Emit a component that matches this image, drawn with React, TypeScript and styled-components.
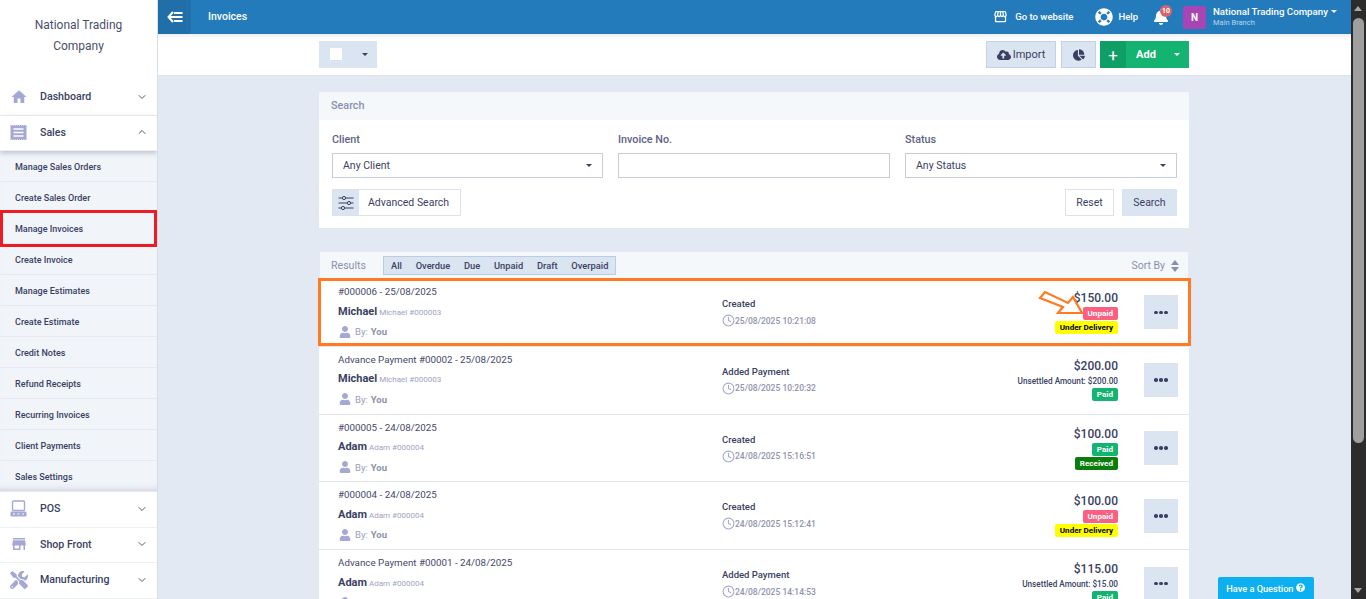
import React from "react";
import styled, { createGlobalStyle } from "styled-components";
import { FaBell, FaChartPie, FaCloudUploadAlt, FaLifeRing, FaQuestionCircle, FaTools, FaUser } from "react-icons/fa";
import { FiChevronDown, FiChevronUp, FiClock } from "react-icons/fi";
import { MdHome, MdStore, MdStorefront } from "react-icons/md";

const INK = "#3a3f63";
const MUTED = "#8a8fb0";
const ICON = "#a5a8d4";

const GlobalStyle = createGlobalStyle`
  html, body { margin: 0; padding: 0; height: 599px; overflow: hidden; background: #e3e9f2; }
  body { font-family: Roboto, "Liberation Sans", sans-serif; color: ${INK}; }
  * { box-sizing: border-box; }
`;

const Page = styled.div`
  display: flex;
  width: 1366px;
  height: 599px;
  overflow: hidden;
  position: relative;
`;

const Sidebar = styled.aside`
  width: 158px;
  flex: none;
  height: 599px;
  background: #fff;
  border-right: 1px solid #d8dde6;
  overflow: hidden;
`;

const Brand = styled.div`
  height: 80px;
  padding: 15px 24px 0;
  text-align: center;
  font-size: 12px;
  line-height: 21px;
  color: #4a4f6c;
`;

const MenuItem = styled.div<{ $open?: boolean }>`
  height: 35.5px;
  display: flex;
  align-items: center;
  padding: 0 9px 1px 10px;
  border-bottom: 1px solid #eef0f4;
  font-size: 10.6px;
  font-weight: 500;
  color: ${INK};
  position: relative;
  background: #fff;
  ${(p) => p.$open && "box-shadow: 0 2px 5px rgba(60,70,100,.3); z-index: 2;"}
`;

const MenuIcon = styled.span`
  width: 30px;
  display: flex;
  color: ${ICON};
  font-size: 18px;
`;

const MenuLabel = styled.span`
  flex: 1;
`;

const Chevron = styled.span`
  display: flex;
  font-size: 12px;
  color: #555a78;
`;

const SubMenu = styled.div`
  background: #f1f4f9;
  box-shadow: inset 0 -8px 8px -8px rgba(60,70,100,.35);
`;

const SubItem = styled.div<{ $marked?: boolean }>`
  height: 31px;
  display: flex;
  align-items: center;
  padding: 2px 0 0 15px;
  font-size: 9px;
  font-weight: 500;
  color: ${INK};
  border-bottom: 1px solid #e6eaf0;
  position: relative;
  ${(p) => p.$marked && "&::after { content: ''; position: absolute; left: 0; right: 0; top: -3px; bottom: -4px; border: 3px solid #ed1c24; }"}
`;

const Main = styled.main`
  flex: 1;
  min-width: 0;
  display: flex;
  flex-direction: column;
`;

const TopBar = styled.header`
  height: 34px;
  flex: none;
  display: flex;
  align-items: center;
  background: #247bbc;
  color: #fff;
`;

const BackButton = styled.div`
  width: 33px;
  height: 34px;
  background: #206fa9;
  display: flex;
  align-items: center;
  justify-content: center;
`;

const PageTitle = styled.div`
  margin-left: 17px;
  padding-bottom: 2px;
  flex: 1;
  font-size: 10.5px;
  font-weight: 500;
`;

const TopLink = styled.div<{ $gap: number; $offset?: number }>`
  display: flex;
  align-items: center;
  font-size: 9.5px;
  font-weight: 500;
  gap: ${(p) => p.$gap}px;
  margin-left: ${(p) => p.$offset || 0}px;
  padding-bottom: 1px;
`;

const WebsiteIcon = styled.span`
  display: flex;
  font-size: 15px;
`;

const HelpIcon = styled.span`
  display: flex;
  font-size: 18px;
`;

const BellWrap = styled.div`
  position: relative;
  display: flex;
  font-size: 16px;
  margin: 0 14px 0 15px;
`;

const BellBadge = styled.span`
  position: absolute;
  top: -4px;
  left: 7px;
  width: 12px;
  height: 12px;
  border-radius: 50%;
  background: #d9626b;
  font-size: 7px;
  font-weight: 700;
  display: flex;
  align-items: center;
  justify-content: center;
`;

const Avatar = styled.div`
  width: 23px;
  height: 23px;
  border-radius: 2px;
  background: #a845b5;
  font-size: 10px;
  font-weight: 700;
  display: flex;
  align-items: center;
  justify-content: center;
`;

const Account = styled.div`
  margin: 0 14px 0 7px;
  width: 124px;
`;

const AccountName = styled.div`
  font-size: 9.7px;
  font-weight: 500;
  line-height: 11px;
  display: flex;
  align-items: center;
  gap: 3px;
  white-space: nowrap;
`;

const AccountBranch = styled.div`
  font-size: 7.5px;
  line-height: 11px;
  color: #b9d6ee;
`;

const Caret = styled.span<{ $color?: string }>`
  width: 0;
  height: 0;
  border-left: 3px solid transparent;
  border-right: 3px solid transparent;
  border-top: 3px solid ${(p) => p.$color || "#fff"};
  display: inline-block;
`;

const ToolbarBar = styled.div`
  height: 42px;
  flex: none;
  background: #fff;
  border-bottom: 1px solid #dde3ec;
  box-shadow: inset 0 6px 6px -6px rgba(60,70,100,.2);
`;

const Wrap = styled.div`
  width: 870px;
  margin-left: 161px;
`;

const ToolbarRow = styled(Wrap)`
  height: 41px;
  display: flex;
  align-items: center;
  justify-content: space-between;
`;

const ToolGroup = styled.div`
  display: flex;
  gap: 5px;
`;

const SelectAll = styled.div`
  width: 58px;
  height: 27px;
  background: #dbe5f1;
  display: flex;
  align-items: center;
  padding: 0 9px 0 11px;
  justify-content: space-between;
`;

const Check = styled.span`
  width: 12px;
  height: 12px;
  background: #fff;
  margin-bottom: 2px;
`;

const ToolButton = styled.div<{ $w: number }>`
  width: ${(p) => p.$w}px;
  height: 27px;
  background: #dbe5f1;
  border: 1px solid #c3d2e6;
  display: flex;
  align-items: center;
  justify-content: center;
  gap: 2px;
  font-size: 11px;
  color: ${INK};
`;

const ToolIcon = styled.span`
  display: flex;
  font-size: 14px;
  color: ${INK};
`;

const PieIcon = styled.span`
  display: flex;
  font-size: 12px;
  color: ${INK};
`;

const AddButton = styled.div`
  width: 89px;
  height: 27px;
  margin-left: -1px;
  background: #14b371;
  color: #fff;
  display: flex;
  align-items: center;
  font-size: 11px;
  font-weight: 700;
`;

const AddPlus = styled.span`
  width: 26px;
  height: 27px;
  background: #0f9f66;
  font-size: 17px;
  font-weight: 400;
  display: flex;
  align-items: center;
  justify-content: center;
`;

const AddLabel = styled.span`
  flex: 1;
  text-align: center;
  padding-right: 8px;
`;

const AddCaret = styled.span`
  display: flex;
  padding-right: 9px;
`;

const Content = styled(Wrap)`
  padding-top: 16px;
`;

const SearchPanel = styled.section`
  background: #fff;
  height: 136px;
  margin-bottom: 23px;
`;

const SearchHeader = styled.div`
  height: 28px;
  background: #f5f8fb;
  padding: 0 12px 2px;
  display: flex;
  align-items: center;
  font-size: 10.8px;
  font-weight: 500;
  color: ${MUTED};
`;

const SearchBody = styled.div`
  padding: 13px 12px 0 13px;
`;

const Fields = styled.div`
  display: grid;
  grid-template-columns: 271px 272px 272px;
  column-gap: 15px;
`;

const Field = styled.div`
  display: flex;
  flex-direction: column;
`;

const FieldLabel = styled.label`
  font-size: 10.8px;
  font-weight: 500;
  line-height: 13px;
  color: #5e6285;
  margin-bottom: 7px;
`;

const Input = styled.div`
  height: 25px;
  border: 1px solid #c8ccd6;
  background: #fff;
  display: flex;
  align-items: center;
  justify-content: space-between;
  padding: 0 10px;
  font-size: 10.5px;
  color: ${INK};
`;

const SearchActions = styled.div`
  display: flex;
  justify-content: space-between;
  margin-top: 11px;
`;

const AdvancedSearch = styled.div`
  width: 129px;
  height: 27px;
  border: 1px solid #dde1e8;
  display: flex;
  align-items: center;
  font-size: 10.5px;
  color: ${INK};
`;

const AdvancedIcon = styled.span`
  width: 26px;
  height: 25px;
  background: #dbe5f1;
  display: flex;
  align-items: center;
  justify-content: center;
  margin-right: 9px;
`;

const ActionGroup = styled.div`
  display: flex;
  gap: 8px;
`;

const PlainButton = styled.div`
  width: 49px;
  height: 27px;
  border: 1px solid #dde1e8;
  background: #fff;
  font-size: 10.5px;
  display: flex;
  align-items: center;
  justify-content: center;
`;

const SearchButton = styled.div`
  width: 55px;
  height: 27px;
  background: #dbe5f1;
  font-size: 10.5px;
  display: flex;
  align-items: center;
  justify-content: center;
`;

const ResultsHeader = styled.div`
  height: 28px;
  background: #f5f8fb;
  border: 1px solid #e6eaf0;
  border-bottom: 0;
  display: flex;
  align-items: center;
  padding: 0 9px 0 11px;
`;

const ResultsLabel = styled.span`
  font-size: 10.6px;
  color: ${MUTED};
  margin-right: 17px;
`;

const Filters = styled.div`
  display: flex;
  height: 19px;
  background: #dbe5f1;
  border: 1px solid #bccde3;
  align-items: center;
  padding: 0 7px 1px;
  gap: 13.8px;
  font-size: 9.3px;
  font-weight: 500;
  flex: none;
`;

const SortBy = styled.div`
  margin-left: auto;
  display: flex;
  align-items: center;
  gap: 6px;
  font-size: 10.5px;
  color: ${MUTED};
`;

const Row = styled.article<{ $marked?: boolean }>`
  height: 67.8px;
  background: #fff;
  border-bottom: 1px solid #e2e5ea;
  display: flex;
  position: relative;
  ${(p) => p.$marked && "&::after { content: ''; position: absolute; left: -1px; right: -2px; top: -1px; bottom: 0; border: 3px solid #ff7a21; pointer-events: none; }"}
`;

const RowLeft = styled.div`
  width: 403px;
  padding: 6px 0 0 19px;
  flex: none;
`;

const RowRef = styled.div`
  font-size: 9.8px;
  line-height: 13px;
  color: #44496a;
`;

const RowClient = styled.div`
  margin-top: 5.6px;
  line-height: 16px;
  font-size: 11px;
  font-weight: 700;
  color: ${INK};
`;

const ClientCode = styled.span`
  font-size: 8px;
  font-weight: 400;
  color: #9ea3c2;
  margin-left: 2px;
`;

const RowBy = styled.div`
  margin-top: 5px;
  display: flex;
  align-items: center;
  gap: 3px;
  font-size: 9.5px;
  color: #9a9eb8;
`;

const ByIcon = styled.span`
  display: flex;
  font-size: 12px;
  color: ${ICON};
  margin: 0 1px;
`;

const ByName = styled.b`
  font-weight: 700;
  color: #8d91ab;
`;

const RowMiddle = styled.div`
  width: 235px;
  padding-top: 18px;
  flex: none;
`;

const ActionName = styled.div`
  font-size: 9.5px;
  font-weight: 500;
  line-height: 13px;
  color: ${INK};
`;

const ActionTime = styled.div`
  margin-top: 4px;
  display: flex;
  align-items: center;
  font-size: 8.5px;
  color: #8f93ae;
  font-weight: 500;
`;

const ClockIcon = styled.span`
  display: flex;
  font-size: 13px;
  color: ${ICON};
`;

const RowAmount = styled.div`
  flex: 1;
  display: flex;
  flex-direction: column;
  align-items: flex-end;
  padding-top: 11px;
`;

const Amount = styled.div`
  font-size: 12px;
  font-weight: 500;
  line-height: 16px;
  color: ${INK};
`;

const Unsettled = styled.div`
  font-size: 8.2px;
  font-weight: 500;
  line-height: 12px;
  margin-top: 1px;
  color: ${INK};
`;

const Badge = styled.span<{ $bg: string; $fg: string }>`
  background: ${(p) => p.$bg};
  color: ${(p) => p.$fg};
  font-size: 8.1px;
  font-weight: 700;
  height: 13px;
  line-height: 13px;
  padding: 0 5px;
  border-radius: 2px;
  margin-top: 1px;
`;

const RowMenu = styled.div`
  width: 71px;
  flex: none;
  display: flex;
  align-items: center;
  justify-content: flex-end;
  padding-right: 11px;
`;

const DotsButton = styled.div`
  width: 34px;
  height: 34px;
  background: #dbe5f1;
  display: flex;
  align-items: center;
  justify-content: center;
  gap: 1.5px;
`;

const Dot = styled.i`
  width: 3.5px;
  height: 3.5px;
  border-radius: 50%;
  background: ${INK};
`;

const ArrowMark = styled.svg`
  position: absolute;
  left: 719px;
  top: 11px;
  pointer-events: none;
`;

const Scrollbar = styled.div`
  width: 15px;
  flex: none;
  height: 599px;
  background: #2c2c2c;
  position: relative;
  margin-left: auto;
`;

const ScrollThumb = styled.div`
  position: absolute;
  left: 2px;
  right: 2px;
  top: 18px;
  height: 425px;
  border-radius: 6px;
  background: #9f9f9f;
`;

const ScrollUp = styled.span`
  position: absolute;
  left: 3px;
  top: 6px;
  border-left: 4.5px solid transparent;
  border-right: 4.5px solid transparent;
  border-bottom: 5px solid #a8a8a8;
`;

const ScrollDown = styled.span`
  position: absolute;
  left: 3px;
  bottom: 6px;
  border-left: 4.5px solid transparent;
  border-right: 4.5px solid transparent;
  border-top: 5px solid #a8a8a8;
`;

const QuestionButton = styled.div`
  position: absolute;
  left: 1218px;
  top: 577px;
  width: 96px;
  height: 22px;
  background: #0cb0f0;
  color: #fff;
  border-radius: 2px 2px 0 0;
  font-size: 9.2px;
  font-weight: 500;
  display: flex;
  align-items: center;
  justify-content: center;
  gap: 3px;
`;

const SalesIcon = () => (
  <svg width="17" height="17" viewBox="0 0 17 17">
    <rect x="0.5" y="1" width="16" height="15" fill="#a5a8d4" />
    <path d="M1 1h15M1 16h15" stroke="#fff" strokeWidth="1" strokeDasharray="1 1" />
    <path d="M3.5 5h10M3.5 8.5h10M3.5 12h10" stroke="#fff" strokeWidth="1.3" />
  </svg>
);

const PosIcon = () => (
  <svg width="17" height="17" viewBox="0 0 17 17" fill="none">
    <rect x="2.5" y="1" width="12" height="9.5" rx="1" stroke="#a5a8d4" strokeWidth="1.4" />
    <rect x="0.5" y="11.5" width="16" height="5" rx="1.2" fill="#a5a8d4" />
    <path d="M3 14h2M7.5 14h2M12 14h2" stroke="#fff" strokeWidth="1" />
  </svg>
);

const BackArrow = () => (
  <svg width="16" height="12" viewBox="0 0 16 12" fill="none" stroke="#fff" strokeWidth="2">
    <path d="M6 1L1.5 6 6 11" />
    <path d="M2 6h13.5M7 2h8.5M7 10h8.5" />
  </svg>
);

const Sliders = () => (
  <svg width="16" height="14" viewBox="0 0 16 14" fill="none" stroke="#3a3f63" strokeWidth="1">
    <path d="M0.5 2h15M0.5 7h15M0.5 12h15" />
    <circle cx="6" cy="2" r="1.6" fill="#dbe5f1" />
    <circle cx="11" cy="7" r="1.6" fill="#dbe5f1" />
    <circle cx="5" cy="12" r="1.6" fill="#dbe5f1" />
  </svg>
);

const SortIcon = () => (
  <svg width="8" height="12" viewBox="0 0 8 12" fill="#8a8fb0">
    <path d="M4 0l4 5H0zM4 12L0 7h8z" />
  </svg>
);

const subItems = [
  "Manage Sales Orders",
  "Create Sales Order",
  "Manage Invoices",
  "Create Invoice",
  "Manage Estimates",
  "Create Estimate",
  "Credit Notes",
  "Refund Receipts",
  "Recurring Invoices",
  "Client Payments",
  "Sales Settings",
];

const UNPAID = { label: "Unpaid", bg: "#fb5f82", fg: "#fff" };
const PAID = { label: "Paid", bg: "#14b371", fg: "#fff" };
const DELIVERY = { label: "Under Delivery", bg: "#ffff00", fg: "#000" };
const RECEIVED = { label: "Received", bg: "#0a7d0a", fg: "#fff" };

const rows = [
  { ref: "#000006 - 25/08/2025", client: "Michael", code: "Michael #000003", action: "Created", time: "25/08/2025 10:21:08", amount: "$150.00", badges: [UNPAID, DELIVERY], marked: true },
  { ref: "Advance Payment #00002 - 25/08/2025", client: "Michael", code: "Michael #000003", action: "Added Payment", time: "25/08/2025 10:20:32", amount: "$200.00", unsettled: "Unsettled Amount: $200.00", badges: [PAID] },
  { ref: "#000005 - 24/08/2025", client: "Adam", code: "Adam #000004", action: "Created", time: "24/08/2025 15:16:51", amount: "$100.00", badges: [PAID, RECEIVED] },
  { ref: "#000004 - 24/08/2025", client: "Adam", code: "Adam #000004", action: "Created", time: "24/08/2025 15:12:41", amount: "$100.00", badges: [UNPAID, DELIVERY] },
  { ref: "Advance Payment #00001 - 24/08/2025", client: "Adam", code: "Adam #000004", action: "Added Payment", time: "24/08/2025 14:14:53", amount: "$115.00", unsettled: "Unsettled Amount: $15.00", badges: [PAID] },
];

export default function App() {
  return (
    <Page>
      <GlobalStyle />
      <Sidebar>
        <Brand>National Trading Company</Brand>
        <MenuItem>
          <MenuIcon><MdHome /></MenuIcon>
          <MenuLabel>Dashboard</MenuLabel>
          <Chevron><FiChevronDown /></Chevron>
        </MenuItem>
        <MenuItem $open>
          <MenuIcon><SalesIcon /></MenuIcon>
          <MenuLabel>Sales</MenuLabel>
          <Chevron><FiChevronUp /></Chevron>
        </MenuItem>
        <SubMenu>
          {subItems.map((item) => (
            <SubItem key={item} $marked={item === "Manage Invoices"}>{item}</SubItem>
          ))}
        </SubMenu>
        <MenuItem>
          <MenuIcon><PosIcon /></MenuIcon>
          <MenuLabel>POS</MenuLabel>
          <Chevron><FiChevronDown /></Chevron>
        </MenuItem>
        <MenuItem>
          <MenuIcon><MdStore /></MenuIcon>
          <MenuLabel>Shop Front</MenuLabel>
          <Chevron><FiChevronDown /></Chevron>
        </MenuItem>
        <MenuItem>
          <MenuIcon><FaTools /></MenuIcon>
          <MenuLabel>Manufacturing</MenuLabel>
          <Chevron><FiChevronDown /></Chevron>
        </MenuItem>
      </Sidebar>

      <Main>
        <TopBar>
          <BackButton><BackArrow /></BackButton>
          <PageTitle>Invoices</PageTitle>
          <TopLink $gap={7}>
            <WebsiteIcon><MdStorefront /></WebsiteIcon>
            Go to website
          </TopLink>
          <TopLink $gap={5} $offset={22}>
            <HelpIcon><FaLifeRing /></HelpIcon>
            Help
          </TopLink>
          <BellWrap>
            <FaBell />
            <BellBadge>10</BellBadge>
          </BellWrap>
          <Avatar>N</Avatar>
          <Account>
            <AccountName>National Trading Company <Caret /></AccountName>
            <AccountBranch>Main Branch</AccountBranch>
          </Account>
        </TopBar>

        <ToolbarBar>
          <ToolbarRow>
            <SelectAll>
              <Check />
              <Caret $color={INK} />
            </SelectAll>
            <ToolGroup>
              <ToolButton $w={70}>
                <ToolIcon><FaCloudUploadAlt /></ToolIcon>
                Import
              </ToolButton>
              <ToolButton $w={35}>
                <PieIcon><FaChartPie /></PieIcon>
              </ToolButton>
              <AddButton>
                <AddPlus>+</AddPlus>
                <AddLabel>Add</AddLabel>
                <AddCaret><Caret /></AddCaret>
              </AddButton>
            </ToolGroup>
          </ToolbarRow>
        </ToolbarBar>

        <Content>
          <SearchPanel>
            <SearchHeader>Search</SearchHeader>
            <SearchBody>
              <Fields>
                <Field>
                  <FieldLabel>Client</FieldLabel>
                  <Input>Any Client <Caret $color={INK} /></Input>
                </Field>
                <Field>
                  <FieldLabel>Invoice No.</FieldLabel>
                  <Input />
                </Field>
                <Field>
                  <FieldLabel>Status</FieldLabel>
                  <Input>Any Status <Caret $color={INK} /></Input>
                </Field>
              </Fields>
              <SearchActions>
                <AdvancedSearch>
                  <AdvancedIcon><Sliders /></AdvancedIcon>
                  Advanced Search
                </AdvancedSearch>
                <ActionGroup>
                  <PlainButton>Reset</PlainButton>
                  <SearchButton>Search</SearchButton>
                </ActionGroup>
              </SearchActions>
            </SearchBody>
          </SearchPanel>

          <ResultsHeader>
            <ResultsLabel>Results</ResultsLabel>
            <Filters>
              <span>All</span>
              <span>Overdue</span>
              <span>Due</span>
              <span>Unpaid</span>
              <span>Draft</span>
              <span>Overpaid</span>
            </Filters>
            <SortBy>Sort By <SortIcon /></SortBy>
          </ResultsHeader>

          {rows.map((row) => (
            <Row key={row.ref} $marked={row.marked}>
              <RowLeft>
                <RowRef>{row.ref}</RowRef>
                <RowClient>
                  {row.client}
                  <ClientCode>{row.code}</ClientCode>
                </RowClient>
                <RowBy>
                  <ByIcon><FaUser /></ByIcon>
                  By: <ByName>You</ByName>
                </RowBy>
              </RowLeft>
              <RowMiddle>
                <ActionName>{row.action}</ActionName>
                <ActionTime>
                  <ClockIcon><FiClock /></ClockIcon>
                  {row.time}
                </ActionTime>
              </RowMiddle>
              <RowAmount>
                <Amount>{row.amount}</Amount>
                {row.unsettled && <Unsettled>{row.unsettled}</Unsettled>}
                {row.badges.map((badge) => (
                  <Badge key={badge.label} $bg={badge.bg} $fg={badge.fg}>{badge.label}</Badge>
                ))}
              </RowAmount>
              <RowMenu>
                <DotsButton><Dot /><Dot /><Dot /></DotsButton>
              </RowMenu>
              {row.marked && (
                <ArrowMark width="46" height="26" viewBox="0 0 46 26" fill="#fff" stroke="#ff7a21" strokeWidth="2.2">
                  <path d="M2 8L7 2 30 13 35 7 44 23 20 23 25 17Z" />
                </ArrowMark>
              )}
            </Row>
          ))}
        </Content>
      </Main>

      <Scrollbar>
        <ScrollUp />
        <ScrollThumb />
        <ScrollDown />
      </Scrollbar>

      <QuestionButton>
        Have a Question <FaQuestionCircle />
      </QuestionButton>
    </Page>
  );
}
